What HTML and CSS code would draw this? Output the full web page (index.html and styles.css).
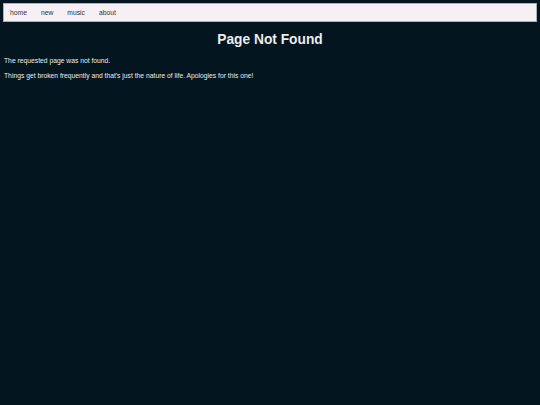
FILE: index.html
```html
<!DOCTYPE html>
<html lang="en">
<head>
    <meta charset="UTF-8">
    <title>Page Not Found</title>
    <link rel="stylesheet" href="styles.css">
</head>
<body>

<div class="navbar">
    <ul class="navbar-nav">
        <li class="nav-link"><a href="#">home</a></li>
        <li class="nav-link"><a href="#">new</a></li>
        <li class="nav-link"><a href="#">music</a></li>
        <li class="nav-link"><a href="#">about</a></li>
    </ul>
</div>

<div class="content">
    <h1>Page Not Found</h1>
    <p>The requested page was not found.</p>
    <p>Things get broken frequently and that's just the nature of life. Apologies for this one!</p>
</div>

</body>
</html>
```

FILE: styles.css
```css
body {
    margin: 0;
    padding: 3px;
    background-color: #03151f;
    color: #ececec;
    font-family: 'Liberation Sans', Arial, sans-serif;
    font-size: 6.75px;
}

.navbar {
    background-color: #f6f0f4;
    border: 1px solid #a9b0b6;
    height: 17px;
    display: flex;
    align-items: center;
}

.navbar-nav {
    display: flex;
    list-style: none;
    margin: 0;
    padding: 0 0 0 6px;
}

.nav-link {
    margin-right: 14px;
}

.nav-link a {
    color: #333;
    text-decoration: none;
}

.content {
    padding: 0 1px;
}

h1 {
    text-align: center;
    font-size: 13.75px;
    margin: 10px 0 10px;
}

p {
    margin: 0 0 8px;
}
```
